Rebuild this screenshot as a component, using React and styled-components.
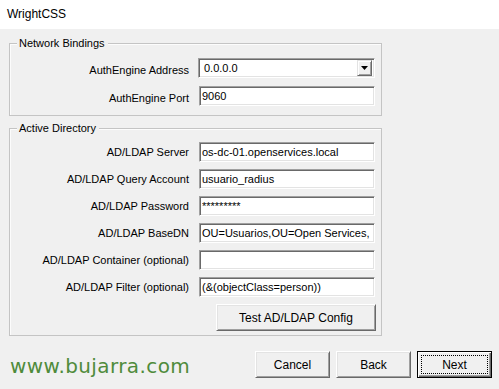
import React from "react";
import styled, { createGlobalStyle } from "styled-components";

const GlobalStyle = createGlobalStyle`
  html, body {
    margin: 0;
    padding: 0;
    background: #f0f0f0;
  }
  body {
    font-family: "Liberation Sans", Arial, sans-serif;
    font-size: 11px;
    color: #000;
  }
`;

const networkRows = [
  { label: "AuthEngine Address", value: "0.0.0.0", select: true },
  { label: "AuthEngine Port", value: "9060" },
];

const adRows = [
  { label: "AD/LDAP Server", value: "os-dc-01.openservices.local" },
  { label: "AD/LDAP Query Account", value: "usuario_radius" },
  { label: "AD/LDAP Password", value: "*********" },
  { label: "AD/LDAP BaseDN", value: "OU=Usuarios,OU=Open Services, DC=openservices,DC=local" },
  { label: "AD/LDAP Container (optional)", value: "" },
  { label: "AD/LDAP Filter (optional)", value: "(&(objectClass=person))" },
];

const FormRows = ({ rows, labelDrop = 0 }) =>
  rows.map((row) => (
    <React.Fragment key={row.label}>
      <Label $drop={labelDrop}>{row.label}</Label>
      {row.select ? (
        <Select>
          <SelectText>{row.value}</SelectText>
          <SelectButton>
            <svg width="7" height="4" viewBox="0 0 7 4">
              <path d="M0 0h7L3.5 4z" fill="#000" />
            </svg>
          </SelectButton>
        </Select>
      ) : (
        <Field defaultValue={row.value} spellCheck={false} />
      )}
    </React.Fragment>
  ));

const App = () => (
  <>
    <GlobalStyle />
    <Window>
      <TitleBar>WrightCSS</TitleBar>
      <Body>
        <GroupBox $top={14} $padTop={14} $padBottom={9}>
          <Legend>Network Bindings</Legend>
          <Grid $gap={8}>
            <FormRows rows={networkRows} labelDrop={2} />
          </Grid>
        </GroupBox>
        <GroupBox $top={12} $padTop={13} $padBottom={4}>
          <Legend>Active Directory</Legend>
          <Grid $gap={7}>
            <FormRows rows={adRows} />
            <TestRow>
              <Button $width={160} $height={27}>Test AD/LDAP Config</Button>
            </TestRow>
          </Grid>
        </GroupBox>
      </Body>
      <Footer>
        <Watermark>www.bujarra.com</Watermark>
        <Actions>
          <Button $width={75} $height={27}>Cancel</Button>
          <Button $width={75} $height={27}>Back</Button>
          <Button $width={75} $height={27} $default>
            <Focus>Next</Focus>
          </Button>
        </Actions>
      </Footer>
    </Window>
  </>
);

const Window = styled.div`
  width: 499px;
  height: 389px;
  display: flex;
  flex-direction: column;
  background: #f0f0f0;
  overflow: hidden;
`;

const TitleBar = styled.div`
  height: 29px;
  flex-shrink: 0;
  background: #fff;
  display: flex;
  align-items: center;
  padding-left: 7px;
  padding-bottom: 1px;
  box-sizing: border-box;
  font-size: 12px;
`;

const Body = styled.div`
  padding: 0 0 0 9px;
  display: flex;
  flex-direction: column;
`;

const GroupBox = styled.div`
  position: relative;
  width: 373px;
  box-sizing: border-box;
  margin-top: ${(p) => p.$top}px;
  padding: ${(p) => p.$padTop}px 5px ${(p) => p.$padBottom}px 0;
  border: 1px solid #c4c4c4;
  box-shadow: inset 1px 1px 0 #fcfcfc;
`;

const Legend = styled.div`
  position: absolute;
  top: -8px;
  left: 7px;
  padding: 0 3px 0 2px;
  background: #f0f0f0;
  line-height: 14px;
`;

const Grid = styled.div`
  display: grid;
  grid-template-columns: 179px 176px;
  column-gap: 10px;
  row-gap: ${(p) => p.$gap}px;
  align-items: center;
`;

const Label = styled.div`
  text-align: right;
  white-space: nowrap;
  line-height: 20px;
  position: relative;
  top: ${(p) => p.$drop}px;
`;

const sunken = `
  box-sizing: border-box;
  height: 20px;
  background: #fff;
  border: 1px solid;
  border-color: #a0a0a0 #fff #fff #a0a0a0;
  box-shadow: inset 1px 1px 0 #696969, inset -1px -1px 0 #e3e3e3;
`;

const Field = styled.input`
  ${sunken}
  width: 176px;
  margin: 0;
  padding: 0 2px 0 2px;
  font-family: "Liberation Sans", Arial, sans-serif;
  font-size: 11px;
  color: #000;
  outline: none;
`;

const Select = styled.div`
  ${sunken}
  width: 177px;
  margin-left: -1px;
  display: flex;
  align-items: center;
  padding: 2px 2px 2px 5px;
`;

const SelectText = styled.span`
  flex: 1;
`;

const SelectButton = styled.div`
  width: 15px;
  height: 16px;
  box-sizing: border-box;
  display: flex;
  align-items: center;
  justify-content: center;
  background: #f0f0f0;
  border: 1px solid;
  border-color: #e3e3e3 #696969 #696969 #e3e3e3;
  box-shadow: inset 1px 1px 0 #fff, inset -1px -1px 0 #a0a0a0;
`;

const TestRow = styled.div`
  grid-column: 1 / -1;
  display: flex;
  justify-content: flex-end;
  margin-right: -1px;
`;

const Button = styled.div`
  width: ${(p) => p.$width}px;
  height: ${(p) => p.$height}px;
  box-sizing: border-box;
  display: flex;
  align-items: center;
  justify-content: center;
  background: #f0f0f0;
  font-size: 12px;
  border: 1px solid;
  border-color: ${(p) => (p.$default ? "#000" : "#fff #696969 #696969 #fff")};
  box-shadow: ${(p) =>
    p.$default
      ? "inset 1px 1px 0 #fff, inset -1px -1px 0 #696969, inset -2px -2px 0 #a0a0a0"
      : "inset 1px 1px 0 #e3e3e3, inset -1px -1px 0 #a0a0a0"};
  padding: ${(p) => (p.$default ? "3px" : "0")};
`;

const Focus = styled.div`
  flex: 1;
  align-self: stretch;
  display: flex;
  align-items: center;
  justify-content: center;
  border: 1px dotted #000;
`;

const Footer = styled.div`
  margin-top: 15px;
  display: flex;
  align-items: flex-start;
  justify-content: space-between;
  padding: 0 7px 0 10px;
`;

const Watermark = styled.div`
  font-family: "DejaVu Sans", Verdana, sans-serif;
  font-size: 20px;
  line-height: 24px;
  color: #4f8b3b;
  letter-spacing: 0.4px;
  margin-top: 3px;
`;

const Actions = styled.div`
  display: flex;
  gap: 6px;
`;

export default App;
